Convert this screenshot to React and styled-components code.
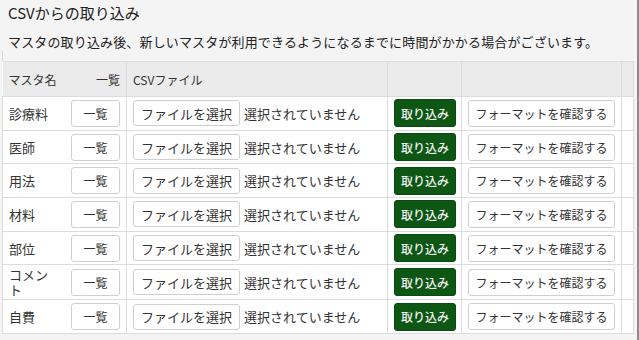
import React from "react";
import styled, { createGlobalStyle } from "styled-components";

const GlobalStyle = createGlobalStyle`
  html, body {
    margin: 0;
    padding: 0;
    background: #f3f3f3;
  }
  body {
    font-family: "Noto Sans CJK JP", "Noto Sans", sans-serif;
    color: #333;
  }
`;

const Page = styled.div`
  width: 637px;
  height: 340px;
  border-right: 2px solid #8c8c8c;
  background: #f4f4f4;
  overflow: hidden;
`;

const Header = styled.div`
  padding: 3px 8px 0;
`;

const Title = styled.h2`
  margin: 0;
  font-size: 15px;
  font-weight: 400;
  line-height: 20px;
  color: #222;
`;

const Lead = styled.p`
  margin: 10px 0 0;
  font-size: 13px;
  line-height: 18px;
  color: #222;
  letter-spacing: 0.15px;
`;

const TableWrap = styled.div`
  margin: 0 0 0 2px;
  padding-top: 10px;
  width: 631px;
  border-left: 1px solid #dadada;
`;

const Table = styled.table`
  width: 631px;
  margin-left: -1px;
  border-collapse: collapse;
  table-layout: fixed;
  background: #fff;
`;

const HeadRow = styled.tr`
  background: #ebebeb;
  height: 35px;
`;

const Th = styled.th`
  box-sizing: border-box;
  font-size: 12px;
  font-weight: 400;
  color: #333;
  text-align: ${(p) => p.align || "left"};
  padding: 0 6px;
  border-top: 1px solid #dcdcdc;
  border-bottom: 1px solid #dcdcdc;
  border-left: ${(p) => (p.joined ? "none" : "1px solid #dcdcdc")};
  border-right: ${(p) => (p.joined ? "none" : "1px solid #dcdcdc")};
`;

const Row = styled.tr`
  height: 33.7px;
`;

const Td = styled.td`
  box-sizing: border-box;
  padding: 2px ${(p) => (p.padRight !== undefined ? p.padRight : 6)}px 2px 6px;
  font-size: 13px;
  line-height: 15px;
  color: #333;
  vertical-align: middle;
  text-align: ${(p) => p.align || "left"};
  border-bottom: 1px solid #dcdcdc;
  border-left: ${(p) => (p.joinLeft ? "none" : "1px solid #dcdcdc")};
  border-right: ${(p) => (p.joinRight ? "none" : "1px solid #dcdcdc")};
`;

const Button = styled.button`
  display: inline-flex;
  align-items: center;
  justify-content: center;
  vertical-align: middle;
  box-sizing: border-box;
  height: 27px;
  width: ${(p) => p.w}px;
  padding: 0;
  font-family: inherit;
  font-size: 12px;
  color: #333;
  background: #fff;
  border: 1px solid #cfcfcf;
  border-radius: 3px;
  cursor: pointer;
`;

const PrimaryButton = styled(Button)`
  height: 28px;
  color: #f2f2f2;
  background: #0d5614;
  border-color: #0a4a10;
  font-weight: 500;
`;

const FileField = styled.div`
  display: flex;
  align-items: center;
  gap: 4px;
`;

const FileButton = styled.span`
  display: inline-flex;
  align-items: center;
  box-sizing: border-box;
  height: 26px;
  padding: 0 7px;
  font-size: 13px;
  color: #333;
  background: #fff;
  border: 1px solid #cfcfcf;
  border-radius: 3px;
  white-space: nowrap;
`;

const FileState = styled.span`
  font-size: 13px;
  color: #333;
  white-space: nowrap;
`;

const masters = ["診療料", "医師", "用法", "材料", "部位", "コメント", "自費"];

export default function App() {
  return (
    <>
      <GlobalStyle />
      <Page>
        <Header>
          <Title>CSVからの取り込み</Title>
          <Lead>
            マスタの取り込み後、新しいマスタが利用できるようになるまでに時間がかかる場合がございます。
          </Lead>
        </Header>
        <TableWrap>
          <Table>
            <colgroup>
              <col style={{ width: 62 }} />
              <col style={{ width: 62 }} />
              <col style={{ width: 261 }} />
              <col style={{ width: 74 }} />
              <col style={{ width: 160 }} />
              <col style={{ width: 12 }} />
            </colgroup>
            <thead>
              <HeadRow>
                <Th joined>マスタ名</Th>
                <Th joined align="right">
                  一覧
                </Th>
                <Th>CSVファイル</Th>
                <Th />
                <Th />
                <Th />
              </HeadRow>
            </thead>
            <tbody>
              {masters.map((name) => (
                <Row key={name}>
                  <Td joinRight padRight={10}>
                    {name}
                  </Td>
                  <Td joinLeft align="right">
                    <Button w={49}>一覧</Button>
                  </Td>
                  <Td>
                    <FileField>
                      <FileButton>ファイルを選択</FileButton>
                      <FileState>選択されていません</FileState>
                    </FileField>
                  </Td>
                  <Td>
                    <PrimaryButton w={62}>取り込み</PrimaryButton>
                  </Td>
                  <Td>
                    <Button w={147}>フォーマットを確認する</Button>
                  </Td>
                  <Td />
                </Row>
              ))}
            </tbody>
          </Table>
        </TableWrap>
      </Page>
    </>
  );
}
